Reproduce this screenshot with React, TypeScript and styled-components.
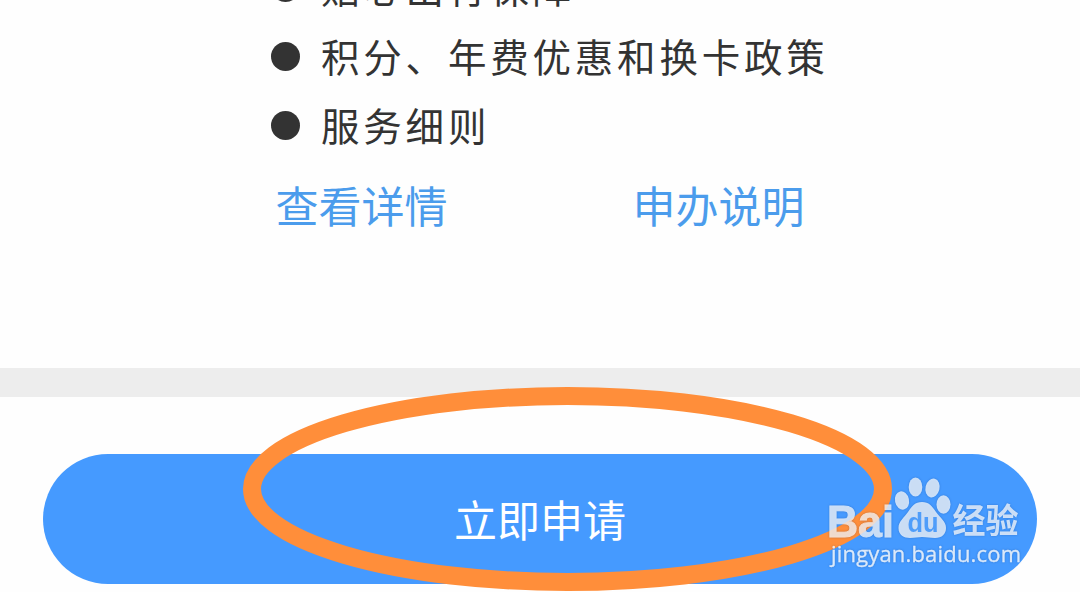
import styled, { createGlobalStyle } from "styled-components";


const GlobalStyle = createGlobalStyle`
  body {
    margin: 0;
    background-color: #fefefe;
    font-family: "Noto Sans CJK SC", sans-serif;
  }
`

const Page = styled.div`
  position: relative;
  display: flex;
  flex-direction: column;
  height: 592px;
  overflow: hidden;
`

const Details = styled.section`
  box-sizing: border-box;
  flex: none;
  height: 368px;
  padding-left: 270.5px;
  overflow: hidden;
`

const BenefitList = styled.ul`
  margin: -48px 0 0;
  padding: 0;
  list-style: none;
`

const Benefit = styled.li`
  display: flex;
  align-items: center;
  gap: 21.5px;
  height: 69px;
  color: #333;
  font-size: 38.5px;
  line-height: 69px;
  letter-spacing: 3.8px;
  white-space: nowrap;

  &::before {
    content: "";
    flex: none;
    width: 29px;
    height: 29px;
    margin-top: 2px;
    border-radius: 50%;
    background-color: #333;
  }
`

const Links = styled.div`
  display: flex;
  gap: 185px;
  margin: 13px 0 0 5px;
`

const Link = styled.a`
  color: #4b9cec;
  font-size: 43px;
  line-height: 64px;
  white-space: nowrap;
  cursor: pointer;
`

const Divider = styled.div`
  flex: none;
  height: 29px;
  background-color: #ededed;
`

const Footer = styled.footer`
  display: flex;
  flex: none;
  padding: 57px 43px 8px;
`

const ApplyButton = styled.button`
  flex: 1;
  height: 130px;
  padding: 0 0 2px;
  border: none;
  border-radius: 65px;
  background-color: #459aff;
  color: #fff;
  font-family: inherit;
  font-size: 43px;
  line-height: 64px;
  cursor: pointer;
`

const Highlight = styled.svg`
  position: absolute;
  left: 242px;
  top: 386px;
  width: 651px;
  height: 206px;
  pointer-events: none;
`

const Watermark = styled.svg`
  position: absolute;
  left: 820px;
  top: 470px;
  width: 210px;
  height: 110px;
  filter: drop-shadow(0 0 1px rgba(0, 40, 100, 0.35));
  pointer-events: none;
`


const benefits = ["贴心出行保障", "积分、年费优惠和换卡政策", "服务细则"];

const App = () => {
    return (<Page>
            <GlobalStyle/>
            <Details>
                <BenefitList>
                    {benefits.map((text) => <Benefit key={text}>{text}</Benefit>)}
                </BenefitList>
                <Links>
                    <Link>查看详情</Link>
                    <Link>申办说明</Link>
                </Links>
            </Details>
            <Divider/>
            <Footer>
                <ApplyButton>立即申请</ApplyButton>
            </Footer>

            <Highlight viewBox="242 386 651 206">
                <ellipse cx="567.5" cy="489" rx="315.5" ry="93" fill="none" stroke="#ff8e3a" strokeWidth="18"/>
            </Highlight>

            <Watermark viewBox="820 470 210 110" fill="#fff">
                <g opacity="0.74">
                    <text x="827" y="536.500" stroke="#fff" strokeWidth="0.9" fontFamily="Liberation Sans" fontWeight="700" fontSize="45" textLength="67" lengthAdjust="spacingAndGlyphs">Bai</text>
                    <ellipse cx="902" cy="500.5" rx="7" ry="9.3" transform="rotate(-12 902 500.5)"/>
                    <ellipse cx="915.5" cy="487" rx="6.8" ry="9.5"/>
                    <ellipse cx="932.5" cy="488" rx="7" ry="9.5" transform="rotate(14 932.5 488)"/>
                    <ellipse cx="943.5" cy="504.5" rx="7" ry="9.2"/>
                    <path d="M922 502C915 502 912 506 908 512C904 518 898.500 521 898.500 528C898.500 535 904 538 910 538C915 538 918 537 922 537C927 537 930 538 935 538C942 538 946 534 946 528C946 521 940 518 936 512C932 506 929 502 922 502Z"/>
                    <text x="952.500" y="533" fontFamily="Noto Sans CJK SC" fontWeight="700" fontSize="34" textLength="66" lengthAdjust="spacingAndGlyphs">经验</text>
                </g>
                <text x="907.500" y="531.500" fill="#4f9dfa" fontFamily="Liberation Sans" fontWeight="700" fontSize="27" textLength="31" lengthAdjust="spacingAndGlyphs">du</text>
                <text x="831" y="562" opacity="0.82" stroke="#fff" strokeWidth="0.3" fontFamily="Open Sans" fontSize="22" textLength="190">jingyan.baidu.com</text>
            </Watermark>
        </Page>
    )
}


export default App;
